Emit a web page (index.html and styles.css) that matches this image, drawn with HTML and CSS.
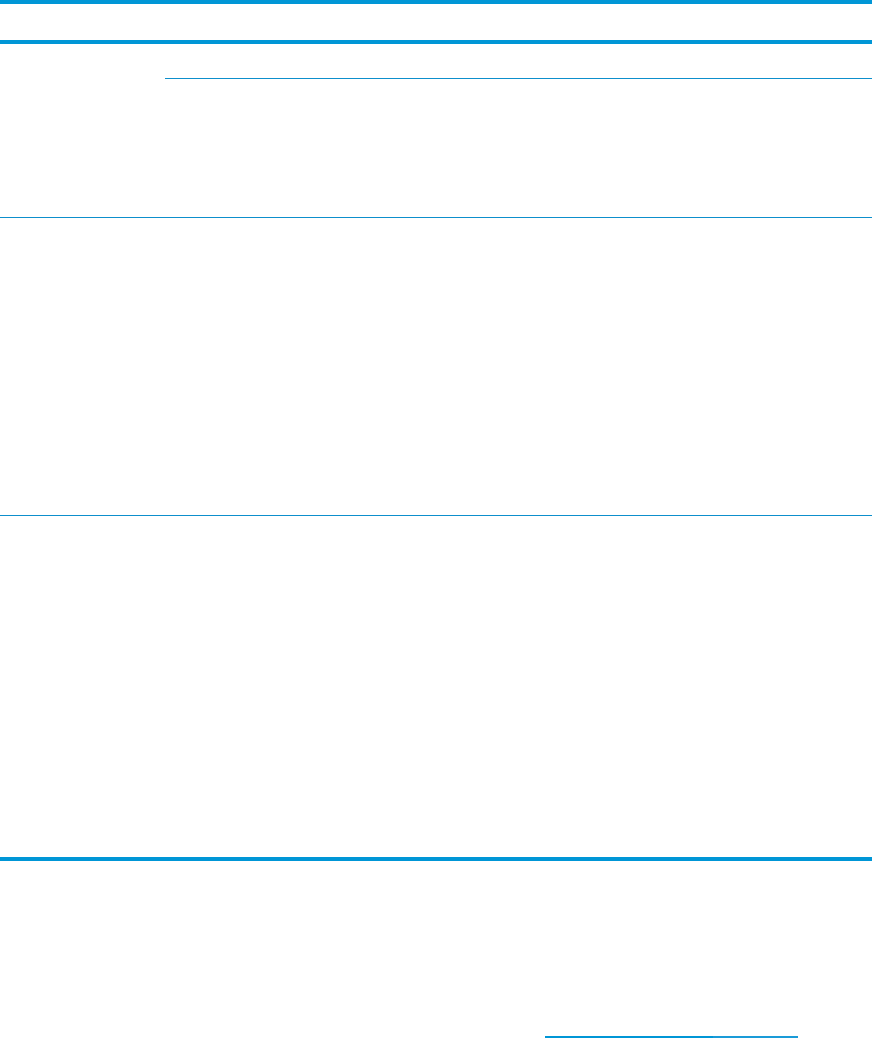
FILE: index.html
```html
<!DOCTYPE html>
<html lang="en">
<head>
<meta charset="utf-8">
<title>Specifications</title>
<link rel="stylesheet" href="styles.css">
</head>
<body>
<div class="page">
  <header class="doc-header"></header>
  <section class="spec-table">
    <div class="row row-1">
      <div class="label"></div>
      <div class="cell">
        <div class="cell-head"></div>
        <div class="cell-body"></div>
      </div>
    </div>
    <div class="row row-2">
      <div class="label"></div>
      <div class="cell"></div>
    </div>
    <div class="row row-3">
      <div class="label"></div>
      <div class="cell"></div>
    </div>
  </section>
  <footer class="doc-footer">
    <div class="links">
      <a class="link link-a" href="#"></a>
      <a class="link link-b" href="#"></a>
    </div>
  </footer>
</div>
</body>
</html>
```

FILE: styles.css
```css
html, body {
  margin: 0;
  padding: 0;
  background: #ffffff;
  font-family: "Liberation Sans", Arial, sans-serif;
}

.page {
  display: flex;
  flex-direction: column;
  width: 872px;
}

.doc-header {
  border-top: 4px solid #0096d6;
  height: 36px;
}

.spec-table {
  border-top: 4px solid #0096d6;
  border-bottom: 4px solid #0096d6;
  display: flex;
  flex-direction: column;
}

.row {
  display: grid;
  grid-template-columns: 165px 1fr;
}

.row-1 {
  height: 173px;
  border-bottom: 1px solid #0d8fcc;
}

.row-2 {
  height: 297px;
  border-bottom: 1px solid #0d8fcc;
}

.row-3 {
  height: 341px;
}

.cell {
  display: flex;
  flex-direction: column;
}

.cell-head {
  height: 34px;
  border-bottom: 1px solid #0d8fcc;
}

.doc-footer {
  padding-top: 175px;
}

.links {
  display: flex;
  margin-left: 545px;
}

.link {
  display: block;
  height: 0;
  border-bottom: 2px solid #0096d6;
}

.link-a {
  width: 168px;
}

.link-b {
  width: 85px;
  border-bottom-color: #1a9bd8;
}
```
